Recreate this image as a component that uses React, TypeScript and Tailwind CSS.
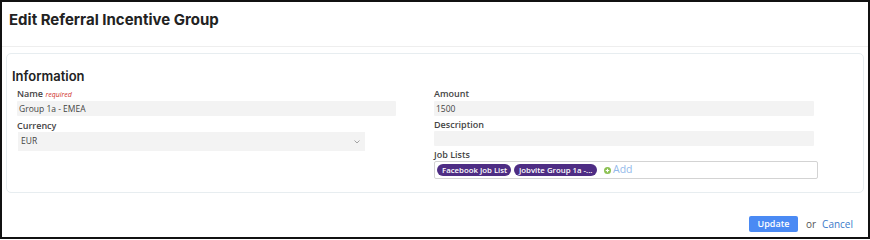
import React from "react";

const label = "block h-[12px] text-[9px] leading-[12px] font-semibold text-[#444]";
const input = "h-[15px] bg-[#f3f3f3] text-[8.5px] leading-[15px] text-[#444] pl-[2px] rounded-[1px]";

export default function App() {
  return (
    <div
      className="w-[870px] h-[239px] border-2 border-[#111] bg-white flex flex-col overflow-hidden"
      style={{ fontFamily: "'Open Sans', 'Liberation Sans', sans-serif" }}
    >
      <div className="h-[45px] shrink-0 border-b border-[#eeeeee] pl-[7px] pt-[8px]">
        <h1
          className="text-[15px] leading-[20px] font-bold text-[#222]"
          style={{ fontFamily: "Inter, 'Liberation Sans', sans-serif" }}
        >
          Edit Referral Incentive Group
        </h1>
      </div>
      <div className="mx-[4px] mt-[6px] h-[140px] shrink-0 border border-[#e7edf0] rounded-[5px] pl-[5px] pt-[14px]">
        <h2
          className="text-[13px] leading-[16px] font-semibold text-[#222]"
          style={{ fontFamily: "Inter, 'Liberation Sans', sans-serif" }}
        >
          Information
        </h2>
        <div className="flex pl-[5px] mt-[4px]">
          <div className="w-[379px] shrink-0">
            <span className={label}>
              Name <span className="italic font-normal text-[7px] text-[#d0332b]">required</span>
            </span>
            <div className={input + " mt-[1px]"}>Group 1a - EMEA</div>
            <span className={label + " mt-[4px]"}>Currency</span>
            <div className="w-[347px] h-[19px] ml-[1px] bg-[#f3f3f3] flex items-center justify-between pl-[3px] pr-[5px] text-[8.5px] text-[#444]">
              <span>EUR</span>
              <svg width="6" height="4" viewBox="0 0 6 4" fill="none">
                <path d="M0.5 0.5 L3 3 L5.5 0.5" stroke="#999" strokeWidth="0.9" />
              </svg>
            </div>
          </div>
          <div className="ml-[38px] w-[384px] shrink-0">
            <span className={label}>Amount</span>
            <div className={input + " mt-[1px] w-[380px]"}>1500</div>
            <span className={label + " mt-[3px]"}>Description</span>
            <div className={input + " w-[380px]"}></div>
            <span className={label + " mt-[3px]"}>Job Lists</span>
            <div className="h-[18px] border border-[#d3d3d3] rounded-[2px] flex items-center pl-[2px] gap-[3px]">
              <span className="h-[12px] w-[74px] rounded-full bg-[#4e2d84] text-white text-[7.8px] leading-[12px] font-semibold pl-[5px] whitespace-nowrap">
                Facebook Job List
              </span>
              <span className="h-[12px] w-[83px] rounded-full bg-[#4e2d84] text-white text-[7.8px] leading-[12px] font-semibold pl-[5px] whitespace-nowrap">
                Jobvite Group 1a -...
              </span>
              <span className="ml-[4px] flex items-center gap-[2px] text-[10.5px] text-[#93b9ea]">
                <svg width="7" height="7" viewBox="0 0 8 8">
                  <circle cx="4" cy="4" r="4" fill="#8cc152" />
                  <path d="M4 2v4M2 4h4" stroke="white" strokeWidth="1.3" />
                </svg>
                Add
              </span>
            </div>
          </div>
        </div>
      </div>
      <div className="flex items-center justify-end pr-[15px] mt-[23px]">
        <button className="w-[49px] h-[16px] bg-[#4a8af4] text-white text-[9px] font-semibold rounded-[2px] leading-[16px]">
          Update
        </button>
        <span className="ml-[8px] text-[10px] text-[#555]">or</span>
        <span className="ml-[6px] text-[10px] text-[#3b79c9]">Cancel</span>
      </div>
    </div>
  );
}
